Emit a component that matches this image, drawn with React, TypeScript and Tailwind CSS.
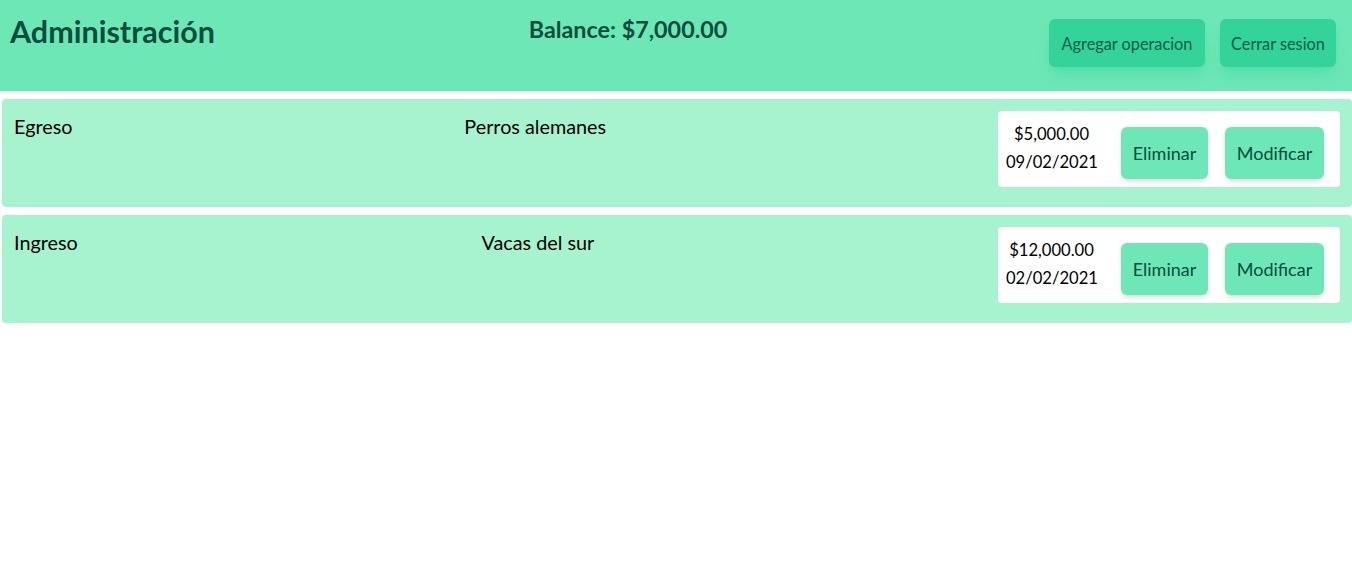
import React from "react";

const ops = [
  { tipo: "Egreso", concepto: "Perros alemanes", monto: "$5,000.00", fecha: "09/02/2021" },
  { tipo: "Ingreso", concepto: "Vacas del sur", monto: "$12,000.00", fecha: "02/02/2021" },
];

export default function App() {
  return (
    <div className="min-h-screen bg-white" style={{ fontFamily: '"Segoe UI", Lato, "Noto Sans", sans-serif' }}>
      <header className="flex h-[91px] items-start justify-between bg-[#6ee7b7] pl-[10px] pr-[16px]">
        <h1 className="mt-[11px] text-[30.5px] font-bold leading-[40px] text-[#064e3b]">Administración</h1>
        <h2 className="mr-2 mt-[14px] text-[23.3px] font-bold leading-[30px] text-[#064e3b]">Balance: $7,000.00</h2>
        <div className="mt-[19px] flex gap-[15px]">
          <button className="h-[48px] w-[156px] rounded-md bg-[#34d399] pt-[2px] text-[16.3px] text-[#065f46] shadow-lg shadow-[#34d399]/40">
            Agregar operacion
          </button>
          <button className="h-[48px] w-[116px] rounded-md bg-[#34d399] pt-[2px] text-[16.3px] text-[#065f46] shadow-lg shadow-[#34d399]/40">
            Cerrar sesion
          </button>
        </div>
      </header>
      <main className="flex flex-col gap-2 pt-2 pl-[2px]">
        {ops.map((o) => (
          <div key={o.tipo} className="flex h-[108px] items-start justify-between rounded bg-[#a7f3d0] p-3 text-[19.8px] leading-7 text-black">
            <span className="pt-px">{o.tipo}</span>
            <span className="pt-px">{o.concepto}</span>
            <div className="flex w-[342px] items-start rounded bg-white p-2">
              <div className="w-[91px] pt-px text-center text-[16.6px] leading-7">
                <div>{o.monto}</div>
                <div>{o.fecha}</div>
              </div>
              <button className="ml-6 mt-2 h-[52px] w-[87px] rounded-md bg-[#6ee7b7] text-[18px] text-[#064e3b] shadow-md">
                Eliminar
              </button>
              <button className="ml-[17px] mt-2 h-[52px] w-[99px] rounded-md bg-[#6ee7b7] text-[18px] text-[#064e3b] shadow-md">
                Modificar
              </button>
            </div>
          </div>
        ))}
      </main>
    </div>
  );
}
